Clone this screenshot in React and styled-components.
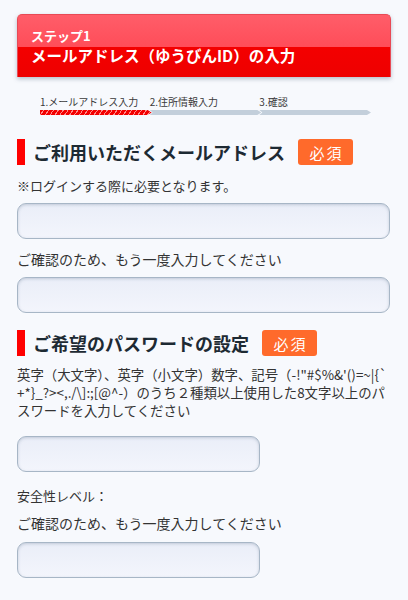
import React from 'react';
import styled, { createGlobalStyle } from 'styled-components';

const GlobalStyle = createGlobalStyle`
  html, body {
    margin: 0;
    padding: 0;
    background: #f7f9fd;
  }
  body {
    font-family: "Noto Sans CJK JP", "Noto Sans", sans-serif;
    color: #333;
  }
`;

const Page = styled.div`
  padding: 14px 17px 20px;
  box-sizing: border-box;
  width: 408px;
`;

const StepHeader = styled.div`
  height: 63px;
  box-sizing: border-box;
  padding: 12px 13px 0;
  border-radius: 5px 5px 0 0;
  border: 1px solid #e84a55;
  border-bottom: none;
  background: linear-gradient(
    to bottom,
    #ff5d69 0%,
    #ff4d59 51%,
    #f40000 51%,
    #ee0000 100%
  );
  box-shadow: 0 2px 4px rgba(60, 80, 110, 0.35);
  color: #fff;
  font-weight: bold;
`;

const StepNo = styled.div`
  font-size: 13px;
  line-height: 18px;
`;

const StepTitle = styled.div`
  font-size: 15.5px;
  line-height: 20px;
`;

const Progress = styled.div`
  display: grid;
  grid-template-columns: repeat(3, 1fr);
  margin: 18px 22px 0 23px;
`;

const ProgressStep = styled.div`
  display: flex;
  flex-direction: column;
  gap: 1px;
`;

const ProgressLabel = styled.div`
  font-size: 10px;
  line-height: 14px;
  color: #3a3a3a;
  white-space: nowrap;
`;

const ProgressBar = styled.div`
  height: 5px;
  background: ${(p) =>
    p.$active
      ? 'repeating-linear-gradient(-55deg, #f30000 0, #f30000 3px, #ff8c8c 3px, #ff8c8c 4px)'
      : '#c3cfdb'};
  clip-path: ${(p) =>
    p.$first
      ? 'polygon(0 0, calc(100% - 4px) 0, 100% 50%, calc(100% - 4px) 100%, 0 100%)'
      : 'polygon(0 0, calc(100% - 4px) 0, 100% 50%, calc(100% - 4px) 100%, 0 100%, 3px 50%)'};
  margin-right: -2px;
`;

const SectionHeading = styled.div`
  display: flex;
  align-items: center;
  height: 26px;
  margin-top: ${(p) => p.$top}px;
`;

const RedBar = styled.span`
  width: 8px;
  align-self: stretch;
  background: #f00;
  margin-right: 8px;
`;

const HeadingText = styled.h2`
  margin: 0;
  font-size: 18px;
  font-weight: bold;
  color: #1d2a33;
  line-height: 26px;
`;

const Required = styled.span`
  display: inline-flex;
  align-items: center;
  justify-content: center;
  width: 55px;
  height: 26px;
  margin-left: 13px;
  border-radius: 3px;
  background: #ff6a2b;
  color: #fff;
  font-size: 15px;
  letter-spacing: 2px;
  text-indent: 2px;
`;

const Note = styled.p`
  margin: ${(p) => p.$top || 0}px 0 0;
  font-size: ${(p) => p.$size || 13}px;
  line-height: ${(p) => p.$lh || 18}px;
  color: #333;
`;

const Rule = styled.p`
  margin: 9px 0 0;
  font-size: 13.4px;
  line-height: 18px;
  color: #333;
  word-break: break-all;
  line-break: anywhere;
`;

const Field = styled.input`
  display: block;
  box-sizing: border-box;
  width: ${(p) => p.$width || 373}px;
  height: 36px;
  margin-top: ${(p) => p.$top}px;
  border: 1.5px solid #a7b6c6;
  border-radius: 9px;
  background: linear-gradient(to bottom, #eaeef8, #f3f5fc);
  box-shadow: inset 0 1px 3px rgba(70, 90, 120, 0.25);
  outline: none;
  font-size: 14px;
  padding: 0 10px;
`;

const steps = ['1.メールアドレス入力', '2.住所情報入力', '3.確認'];

const passwordRule =
  '英字（大文字）、英字（小文字）数字、記号（-!"#$%&\'()=~|{`+*}_?><,./\\]:;[@^-）のうち２種類以上使用した8文字以上のパスワードを入力してください';

export default function App() {
  return (
    <>
      <GlobalStyle />
      <Page>
        <StepHeader>
          <StepNo>ステップ1</StepNo>
          <StepTitle>メールアドレス（ゆうびんID）の入力</StepTitle>
        </StepHeader>

        <Progress>
          {steps.map((s, i) => (
            <ProgressStep key={s}>
              <ProgressLabel>{s}</ProgressLabel>
              <ProgressBar $active={i === 0} $first={i === 0} />
            </ProgressStep>
          ))}
        </Progress>

        <SectionHeading $top={24}>
          <RedBar />
          <HeadingText>ご利用いただくメールアドレス</HeadingText>
          <Required>必須</Required>
        </SectionHeading>
        <Note $top={12}>※ログインする際に必要となります。</Note>
        <Field $top={8} type="email" />

        <Note $top={10} $size={14} $lh={20}>ご確認のため、もう一度入力してください</Note>
        <Field $top={8} type="email" />

        <SectionHeading $top={17}>
          <RedBar />
          <HeadingText>ご希望のパスワードの設定</HeadingText>
          <Required>必須</Required>
        </SectionHeading>
        <Rule>{passwordRule}</Rule>
        <Field $top={17} $width={243} type="password" />

        <Note $top={15}>安全性レベル：</Note>
        <Note $top={8} $size={14} $lh={20}>ご確認のため、もう一度入力してください</Note>
        <Field $top={9} $width={243} type="password" />
      </Page>
    </>
  );
}
